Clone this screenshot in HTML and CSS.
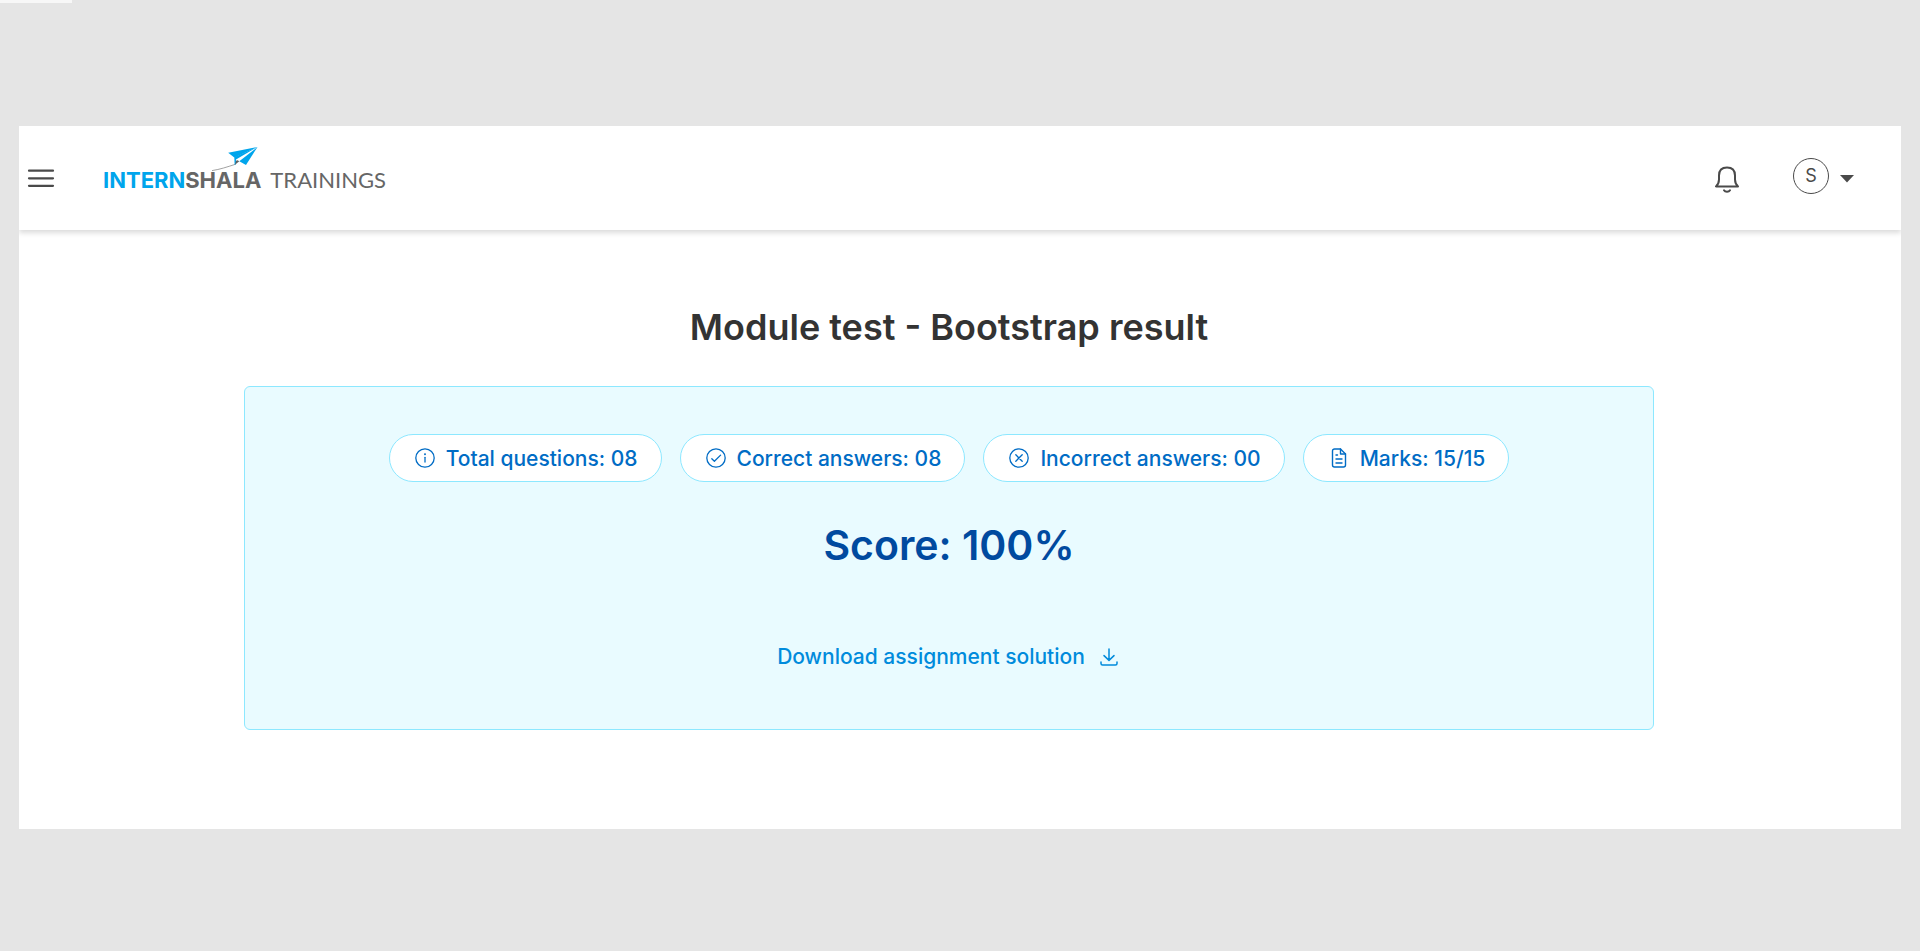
FILE: index.html
```html
<!DOCTYPE html>
<html lang="en">
<head>
<meta charset="utf-8">
<meta name="viewport" content="width=device-width, initial-scale=1">
<title>Module test - Bootstrap result</title>
<link rel="stylesheet" href="styles.css">
</head>
<body>
<div class="load-bar"></div>
<div class="page">
  <header class="header">
    <button class="icon-button menu" type="button" aria-label="Open menu">
      <svg width="28" height="20" viewBox="0 0 28 20" fill="none" stroke="#4a4a4a" stroke-width="2.200" stroke-linecap="round"><path d="M2 2.700H26M2 10.300H26M2 17.800H26"/></svg>
    </button>
    <a class="logo" href="#" aria-label="Internshala Trainings">
      <span class="logo-blue">INTERN</span><span class="logo-gray">SHALA</span><span class="logo-light">TRAININGS</span>
      <svg class="logo-plane" width="48" height="26" viewBox="0 0 48 26"><path d="M0 24.600C8 23.400 15 21 23 18.400" fill="none" stroke="#8a8a8a" stroke-width=".8"/><path d="M16.200 6.800 45.500 1 22.300 11.500Z" fill="#00a5ec"/><path d="M22.300 11 45.500 1 24 13.500V18.500L22.600 18.800Z" fill="#00a5ec"/><path d="M45.500 1 34 19 27.300 15.200Z" fill="#00a5ec"/><path d="M27.300 15.200 23 18.800 24 14.800 25.500 14.200Z" fill="#606060"/></svg>
    </a>
    <div class="actions">
      <button class="icon-button bell" type="button" aria-label="Notifications">
        <svg width="24" height="28" viewBox="0 0 24 28" fill="none" stroke="#4a4a4a" stroke-width="2" stroke-linecap="round" stroke-linejoin="round"><path d="M1 20.400H23C21 18.500 20 16.500 20 13.500V9.500C20 4.500 17 1.500 12 1.500S4 4.500 4 9.500V13.500C4 16.500 3 18.500 1 20.400Z"/><path d="M9 24.300C10.200 26.300 13.800 26.300 15 24.300" stroke-width="2"/></svg>
      </button>
      <button class="account" type="button" aria-label="Account menu">
        <span class="avatar">S</span>
        <svg class="caret" width="14" height="8" viewBox="0 0 14 8" fill="#4a4a4a"><path d="M0 0H14L7 7.500Z"/></svg>
      </button>
    </div>
  </header>
  <main class="content">
    <h1 class="title">Module test - Bootstrap result</h1>
    <section class="result">
      <ul class="stats">
        <li class="stat"><svg width="22" height="22" viewBox="0 0 22 22" fill="none" stroke="currentColor" stroke-width="1.300" stroke-linecap="round"><circle cx="11" cy="11" r="9.200"/><path d="M11 10.300V15"/><circle cx="11" cy="7.200" r=".4"/></svg>Total questions: 08</li>
        <li class="stat"><svg width="22" height="22" viewBox="0 0 22 22" fill="none" stroke="currentColor" stroke-width="1.300" stroke-linecap="round" stroke-linejoin="round"><circle cx="11" cy="11" r="9.200"/><path d="M6.800 11.700 9.400 14.300 15.600 8.100"/></svg>Correct answers: 08</li>
        <li class="stat"><svg width="22" height="22" viewBox="0 0 22 22" fill="none" stroke="currentColor" stroke-width="1.300" stroke-linecap="round"><circle cx="11" cy="11" r="9.200"/><path d="M7.800 7.800 14.200 14.200M14.200 7.800 7.800 14.200"/></svg>Incorrect answers: 00</li>
        <li class="stat"><svg width="22" height="22" viewBox="0 0 22 22" fill="none" stroke="currentColor" stroke-width="1.400" stroke-linecap="round" stroke-linejoin="round"><path d="M12.500 2H6.500A2 2 0 0 0 4.500 4V18A2 2 0 0 0 6.500 20H15.500A2 2 0 0 0 17.500 18V7Z"/><path d="M12.500 2V7H17.500M8 8H9.500M8 12H14M8 16H14"/></svg>Marks: 15/15</li>
      </ul>
      <p class="score">Score: 100%</p>
      <a class="download" href="#">Download assignment solution<svg width="18" height="18" viewBox="0 0 18 18" fill="none" stroke="currentColor" stroke-width="1.500" stroke-linecap="round" stroke-linejoin="round"><path d="M9 1V12.300M4 7.600 9 12.400 14 7.600M1 14V15.500A1.500 1.500 0 0 0 2.500 17H15.500A1.500 1.500 0 0 0 17 15.500V14"/></svg></a>
    </section>
  </main>
</div>
</body>
</html>
```
FILE: styles.css
```css
* { box-sizing: border-box; }
body {
  margin: 0;
  background: #e5e5e5;
  font-family: Inter, "Liberation Sans", sans-serif;
  color: #333;
}
.load-bar { width: 72px; height: 3px; background: #f7f7f7; }
.page { margin: 123px 19px; background: #fff; overflow: hidden; }
.header {
  display: flex;
  align-items: center;
  height: 104px;
  padding: 0 47px 0 8px;
  box-shadow: 0 3px 5px rgba(0, 0, 0, .14);
}
.icon-button, .account { padding: 0; border: 0; background: none; display: flex; }
.logo {
  position: relative;
  display: flex;
  align-items: baseline;
  margin-left: 48px;
  padding-top: 4px;
  font-size: 22px;
  line-height: 28px;
  text-decoration: none;
}
.logo-blue { color: #00a5ec; font-weight: 700; }
.logo-gray { color: #666; font-weight: 700; }
.logo-light { color: #666; font-family: Lato, sans-serif; margin-left: 9px; }
.logo-plane { position: absolute; left: 109px; bottom: 22px; }
.actions { display: flex; align-items: center; gap: 54px; margin-left: auto; }
.bell { padding-top: 3px; }
.account { align-items: center; gap: 11px; margin-bottom: 4px; font-family: inherit; }
.avatar {
  width: 36px;
  height: 36px;
  border: 1px solid #4a4a4a;
  border-radius: 50%;
  font-size: 18px;
  line-height: 34px;
  color: #4a4a4a;
  text-align: center;
}
.caret { margin-top: 6px; }
.content { padding: 73px 247px 99px 225px; }
.title {
  margin: 0 0 35px;
  font-size: 36px;
  line-height: 48px;
  font-weight: 600;
  text-align: center;
}
.result {
  display: flex;
  flex-direction: column;
  align-items: center;
  padding: 47px 24px 57px;
  border: 1px solid #8de8ff;
  border-radius: 6px;
  background: #e9fbff;
}
.stats { display: flex; gap: 18px; margin: 0; padding: 0; list-style: none; }
.stat {
  display: flex;
  align-items: center;
  gap: 10px;
  height: 48px;
  padding: 0 23px 0 24px;
  border: 1px solid #8de8ff;
  border-radius: 24px;
  background: #fff;
  color: #006cc5;
  font-size: 21px;
  font-weight: 500;
  white-space: nowrap;
}
.score {
  margin: 36px 0 0;
  color: #004a9f;
  font-size: 41px;
  line-height: 54px;
  font-weight: 600;
}
.download {
  display: flex;
  align-items: center;
  gap: 15px;
  margin-top: 70px;
  padding-right: 3px;
  color: #008bdc;
  font-size: 21px;
  line-height: 30px;
  font-weight: 500;
  text-decoration: none;
}
```
